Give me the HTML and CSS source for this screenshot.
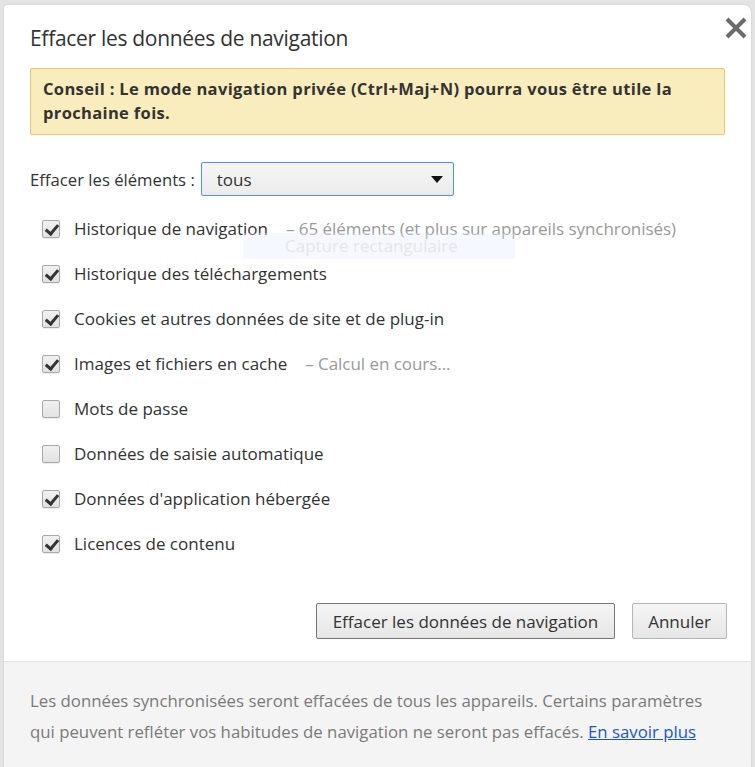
FILE: index.html
```html
<!DOCTYPE html>
<html lang="fr">
<head>
<meta charset="utf-8">
<title>Effacer les données de navigation</title>
<link rel="stylesheet" href="styles.css">
</head>
<body>
<div class="dialog">
  <div class="main">
    <div class="head">
      <h1 class="title">Effacer les données de navigation</h1>
      <button class="close" aria-label="Fermer">
        <svg width="24" height="22" viewBox="0 0 24 22"><path d="M3 2 L21 20 M21 2 L3 20" stroke="#6b6b6b" stroke-width="4" fill="none"/></svg>
      </button>
    </div>
    <div class="tip">Conseil : Le mode navigation privée (Ctrl+Maj+N) pourra vous être utile la prochaine fois.</div>
    <div class="select-row">
      <span class="select-label">Effacer les éléments :</span>
      <div class="select">
        <span>tous</span>
        <svg width="12" height="7" viewBox="0 0 12 7"><path d="M0 0 H12 L6 7 Z" fill="#111"/></svg>
      </div>
    </div>
    <ul class="items">
      <li class="item"><span class="box on"></span><span>Historique de navigation</span><span class="extra">–&nbsp;65 éléments (et plus sur appareils synchronisés)</span></li>
      <li class="item"><span class="box on"></span><span>Historique des téléchargements</span></li>
      <li class="item"><span class="box on"></span><span>Cookies et autres données de site et de plug-in</span></li>
      <li class="item"><span class="box on"></span><span>Images et fichiers en cache</span><span class="extra">–&nbsp;Calcul en cours...</span></li>
      <li class="item"><span class="box"></span><span>Mots de passe</span></li>
      <li class="item"><span class="box"></span><span>Données de saisie automatique</span></li>
      <li class="item"><span class="box on"></span><span>Données d'application hébergée</span></li>
      <li class="item"><span class="box on"></span><span>Licences de contenu</span></li>
    </ul>
    <div class="actions">
      <button class="btn btn-primary">Effacer les données de navigation</button>
      <button class="btn">Annuler</button>
    </div>
  </div>
  <div class="footer">Les données synchronisées seront effacées de tous les appareils. Certains paramètres qui peuvent refléter vos habitudes de navigation ne seront pas effacés. <a href="#">En savoir plus</a></div>
</div>
<div class="ghost"><span>Capture rectangulaire</span></div>
</body>
</html>
```
FILE: styles.css
```css
html, body {
  margin: 0;
  padding: 0;
}
body {
  width: 755px;
  height: 767px;
  overflow: hidden;
  background: #e4e4e4;
  font-family: "Open Sans", "Noto Sans", sans-serif;
  color: #333;
  position: relative;
}
.dialog {
  margin: 5px 0 0 4px;
  width: 747px;
  height: 762px;
  background: #fff;
  border-radius: 3px 7px 0 0;
  box-shadow: 0 0 2px rgba(0,0,0,0.15);
  display: flex;
  flex-direction: column;
}
.main {
  padding: 0 26px 0 26px;
  flex: 1;
}
.head {
  display: flex;
  justify-content: space-between;
  align-items: flex-start;
  height: 63px;
}
.title {
  margin: 19px 0 0 0;
  font-size: 21px;
  font-weight: 400;
  line-height: 28px;
  color: #333;
  letter-spacing: -0.3px;
}
.close {
  margin: 12px -23px 0 0;
  padding: 0;
  border: 0;
  background: none;
  width: 24px;
  height: 22px;
}
.close svg { display: block; }
.tip {
  background: #f9edbe;
  border: 1px solid #f0c36d;
  border-radius: 2px;
  padding: 8px 12px 9px 12px;
  font-size: 16.5px;
  font-weight: 700;
  line-height: 24px;
  color: #333;
  letter-spacing: 0.35px;
}
.select-row {
  display: flex;
  align-items: center;
  margin-top: 27px;
  gap: 6px;
}
.select-label {
  font-size: 16.7px;
}
.select {
  height: 32px;
  border: 1px solid #4d90fe;
  border-radius: 2px;
  background: linear-gradient(#f6f6f6, #ebebeb);
  display: flex;
  align-items: center;
  justify-content: space-between;
  padding: 0 10px 0 15px;
  box-sizing: content-box;
  width: 226px;
  font-size: 17px;
}
.items {
  list-style: none;
  margin: 10px 0 0 0;
  padding: 0 0 0 12px;
}
.item {
  display: flex;
  align-items: center;
  height: 45px;
  font-size: 17px;
}
.box {
  width: 16px;
  height: 16px;
  border: 1px solid #a9a9a9;
  border-radius: 2px;
  background: linear-gradient(#f1f1f1, #e2e2e2);
  margin-right: 14px;
  flex: none;
  position: relative;
  box-shadow: 0 1px 1px rgba(0,0,0,0.08);
}
.box.on::after {
  content: "";
  position: absolute;
  left: 5px;
  top: 1px;
  width: 5px;
  height: 10px;
  border: solid #333;
  border-width: 0 3px 3px 0;
  transform: rotate(40deg);
}
.extra {
  color: #999;
  margin-left: 18px;
  letter-spacing: -0.05px;
}
.actions {
  display: flex;
  justify-content: flex-end;
  gap: 17px;
  margin-top: 37px;
  margin-right: -2px;
}
.btn {
  font-family: inherit;
  font-size: 17px;
  color: #333;
  height: 36px;
  padding: 0 15px;
  border: 1px solid #b5b5b5;
  border-radius: 2px;
  background: linear-gradient(#f5f5f5, #e6e6e6);
}
.btn-primary {
  border-color: #777;
  padding: 0 16px;
}
.footer {
  flex: none;
  height: 106px;
  box-sizing: border-box;
  border-top: 1px solid #e3e3e3;
  background: #f4f4f4;
  padding: 23px 30px 0 26px;
  font-size: 16.8px;
  line-height: 31px;
  color: #7a7a7a;
}
.footer a {
  color: #1a55d6;
  text-decoration: underline;
}
.ghost {
  position: absolute;
  left: 243px;
  top: 233px;
  width: 272px;
  height: 26px;
  background: rgba(225,238,255,0.35);
  box-sizing: border-box;
  padding: 4px 0 0 42px;
  pointer-events: none;
}
.ghost span {
  display: block;
  color: #e6e6e6;
  font-size: 17px;
  line-height: 18px;
}
```
